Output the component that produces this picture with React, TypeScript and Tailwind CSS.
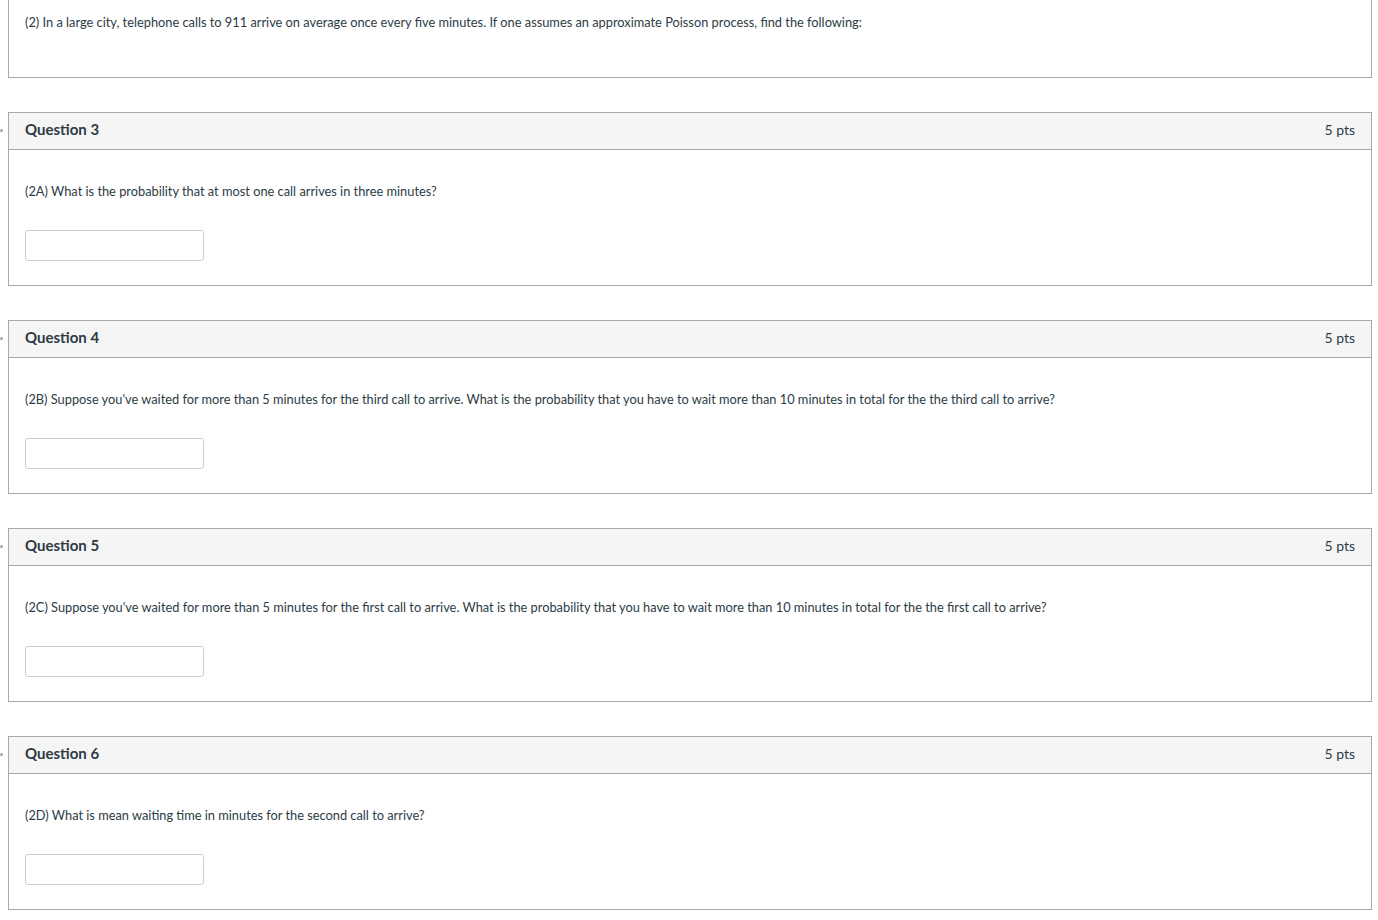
import React from "react";

const questions = [
  {
    num: 3,
    text: "(2A) What is the probability that at most one call arrives in three minutes?",
  },
  {
    num: 4,
    text: "(2B) Suppose you've waited for more than 5 minutes for the third call to arrive. What is the probability that you have to wait more than 10 minutes in total for the the third call to arrive?",
  },
  {
    num: 5,
    text: "(2C) Suppose you've waited for more than 5 minutes for the first call to arrive. What is the probability that you have to wait more than 10 minutes in total for the the first call to arrive?",
  },
  {
    num: 6,
    text: "(2D) What is mean waiting time in minutes for the second call to arrive?",
  },
];

const QuestionCard: React.FC<{ num: number; text: string }> = ({ num, text }) => (
  <div className="relative mt-[34px]">
    <span className="absolute -left-[8px] top-[17px] h-[3px] w-[3px] rounded-full bg-[#8fa8c0]" />
    <div className="border border-[#a8a8a8] bg-white">
      <div className="flex h-[37px] items-center justify-between border-b border-[#a8a8a8] bg-[#f5f5f5] px-4 pb-[4px]">
        <span className="text-[15px] font-bold text-[#2d3b45]">Question {num}</span>
        <span className="text-[14px] text-[#2d3b45]">5 pts</span>
      </div>
      <div className="px-4 pt-[31px] pb-[24px]">
        <p className="text-[12.8px] leading-[20px] text-[#2d3b45]">{text}</p>
        <input
          type="text"
          className="mt-[29px] block h-[31px] w-[179px] rounded-[3px] border border-[#cccccc] bg-white outline-none"
        />
      </div>
    </div>
  </div>
);

export default function App() {
  return (
    <div className="min-h-screen bg-white pl-[8px] pr-[6px] font-['Lato','Noto_Sans',sans-serif]">
      <div className="border-x border-b border-[#a8a8a8] px-4 pt-[12px] pb-[45px]">
        <p className="text-[12.8px] leading-[20px] text-[#2d3b45]">
          (2) In a large city, telephone calls to 911 arrive on average once every five minutes. If one assumes an approximate Poisson process, find the following:
        </p>
      </div>
      {questions.map((q) => (
        <QuestionCard key={q.num} num={q.num} text={q.text} />
      ))}
    </div>
  );
}
